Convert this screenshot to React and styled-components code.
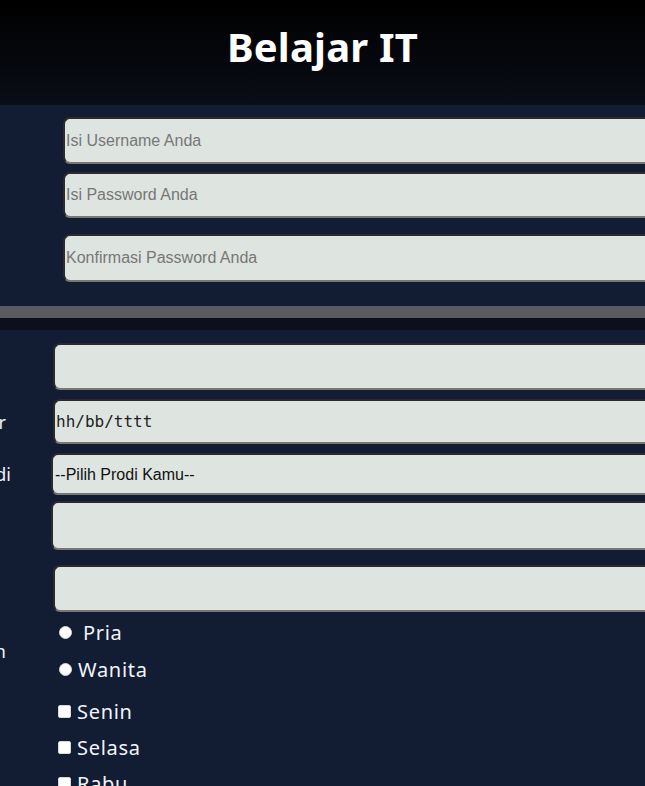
import React from "react";
import styled, { createGlobalStyle } from "styled-components";

const GlobalStyle = createGlobalStyle`
	html, body {
		margin: 0;
		padding: 0;
		background: #121d34;
		overflow: hidden;
	}
	body {
		font-family: "Noto Sans", "Liberation Sans", sans-serif;
	}
`;

const Page = styled.div`
	width: 645px;
	min-height: 786px;
	overflow: hidden;
	background: #121d34;
`;

const Header = styled.header`
	height: 105px;
	background: linear-gradient(180deg, #000000 0%, #0a0d16 100%);
	display: flex;
	justify-content: center;
	align-items: flex-start;
`;

const Title = styled.h1`
	margin: 20px 0 0;
	font-family: "Noto Sans", sans-serif;
	font-weight: 700;
	font-size: 40px;
	line-height: 54px;
	letter-spacing: 0.2px;
	color: #ffffff;
`;

const AccountBox = styled.section`
	display: flex;
	flex-direction: column;
	padding: 12px 0 24px 63px;
`;

const Field = styled.input`
	box-sizing: border-box;
	flex: none;
	width: ${(p) => p.$w || 640}px;
	height: ${(p) => p.$h || 47}px;
	margin: ${(p) => p.$mt || 0}px 0 0 ${(p) => p.$ml || 0}px;
	padding: 1px 1px;
	border-style: solid;
	border-width: 2px;
	border-color: #2b2b2b #6f6f6f #777777 #2b2b2b;
	border-radius: 7px;
	background: #dee4e0;
	font-family: "Liberation Sans", Arial, sans-serif;
	font-size: 16px;
	color: #1f1f1f;
	outline: none;

	&::placeholder {
		color: #777777;
	}
`;

const DateField = styled(Field)`
	font-family: "DejaVu Sans Mono", monospace;
	font-size: 16px;
	padding-left: 1px;
	color: #222;
`;

const Select = styled.select`
	box-sizing: border-box;
	width: 640px;
	height: 42px;
	padding: 0 2px;
	border-style: solid;
	border-width: 2px;
	border-color: #2b2b2b #6f6f6f #777777 #2b2b2b;
	border-radius: 7px;
	background: #dee4e0;
	font-family: "Liberation Sans", Arial, sans-serif;
	font-size: 16px;
	color: #111;
	appearance: none;
	outline: none;
`;

const TextArea = styled.textarea`
	box-sizing: border-box;
	display: block;
	width: 640px;
	height: 49px;
	border-style: solid;
	border-width: 2px;
	border-color: #2b2b2b #6f6f6f #777777 #2b2b2b;
	border-radius: 7px;
	background: #dee4e0;
	resize: none;
	outline: none;
`;

const Divider = styled.div`
	height: 12px;
	background: #5a5b60;
	border-bottom: 12px solid #0b101c;
`;

const ProfileBox = styled.section`
	display: flex;
	flex-direction: column;
	padding-top: 13px;
`;

const Row = styled.div`
	display: grid;
	grid-template-columns: ${(p) => p.$col || 53}px 1fr;
	align-items: center;
	margin-top: ${(p) => p.$mt || 0}px;
`;

const Label = styled.div`
	display: flex;
	justify-content: flex-end;
	padding-right: ${(p) => p.$pr || 0}px;
	font-family: "Noto Sans", sans-serif;
	font-size: 18px;
	color: #eef0f4;
	white-space: nowrap;
	min-width: 0;
`;

const Options = styled.div`
	display: flex;
	flex-direction: column;
`;

const Option = styled.label`
	display: flex;
	align-items: center;
	height: ${(p) => p.$h || 37}px;
	font-family: "Noto Sans", sans-serif;
	font-size: 20px;
	letter-spacing: 0.7px;
	color: #f2f4f8;
	white-space: pre;
`;

const Radio = styled.input.attrs({ type: "radio" })`
	appearance: none;
	width: 13px;
	height: 13px;
	margin: 0 ${(p) => p.$gap || 7}px 0 6px;
	border-radius: 50%;
	background: #ffffff;
	border: 1px solid #d8d8d8;
	box-sizing: border-box;
`;

const Check = styled.input.attrs({ type: "checkbox" })`
	appearance: none;
	width: 13px;
	height: 13px;
	margin: 0 6px 0 5px;
	border-radius: 2px;
	background: #ffffff;
	border: 1px solid #d8d8d8;
	box-sizing: border-box;
`;

export default function App() {
	return (
		<Page>
			<GlobalStyle />
			<Header>
				<Title>Belajar IT</Title>
			</Header>

			<AccountBox>
				<Field placeholder="Isi Username Anda" />
				<Field type="password" placeholder="Isi Password Anda" $mt={8} $h={46} />
				<Field type="password" placeholder="Konfirmasi Password Anda" $mt={16} $h={48} />
			</AccountBox>

			<Divider />

			<ProfileBox>
				<Row>
					<Label />
					<Field />
				</Row>
				<Row $mt={9}>
					<Label $pr={47}>Tanggal Lahir</Label>
					<DateField defaultValue="hh/bb/tttt" $h={45} />
				</Row>
				<Row $mt={9} $col={51}>
					<Label $pr={40}>Prodi</Label>
					<Select defaultValue="">
						<option value="">--Pilih Prodi Kamu--</option>
					</Select>
				</Row>
				<Row $mt={6} $col={51}>
					<Label />
					<TextArea />
				</Row>
				<Row $mt={15}>
					<Label />
					<Field />
				</Row>
				<Row $mt={2}>
					<Label $pr={47}>Jenis Kelamin</Label>
					<Options>
						<Option>
							<Radio name="jk" $gap={11} />
							Pria
						</Option>
						<Option>
							<Radio name="jk" $gap={6} />
							Wanita
						</Option>
					</Options>
				</Row>
				<Row $mt={5}>
					<Label />
					<Options>
						<Option $h={36}>
							<Check />
							Senin
						</Option>
						<Option $h={36}>
							<Check />
							Selasa
						</Option>
						<Option $h={36}>
							<Check />
							Rabu
						</Option>
					</Options>
				</Row>
			</ProfileBox>
		</Page>
	);
}
